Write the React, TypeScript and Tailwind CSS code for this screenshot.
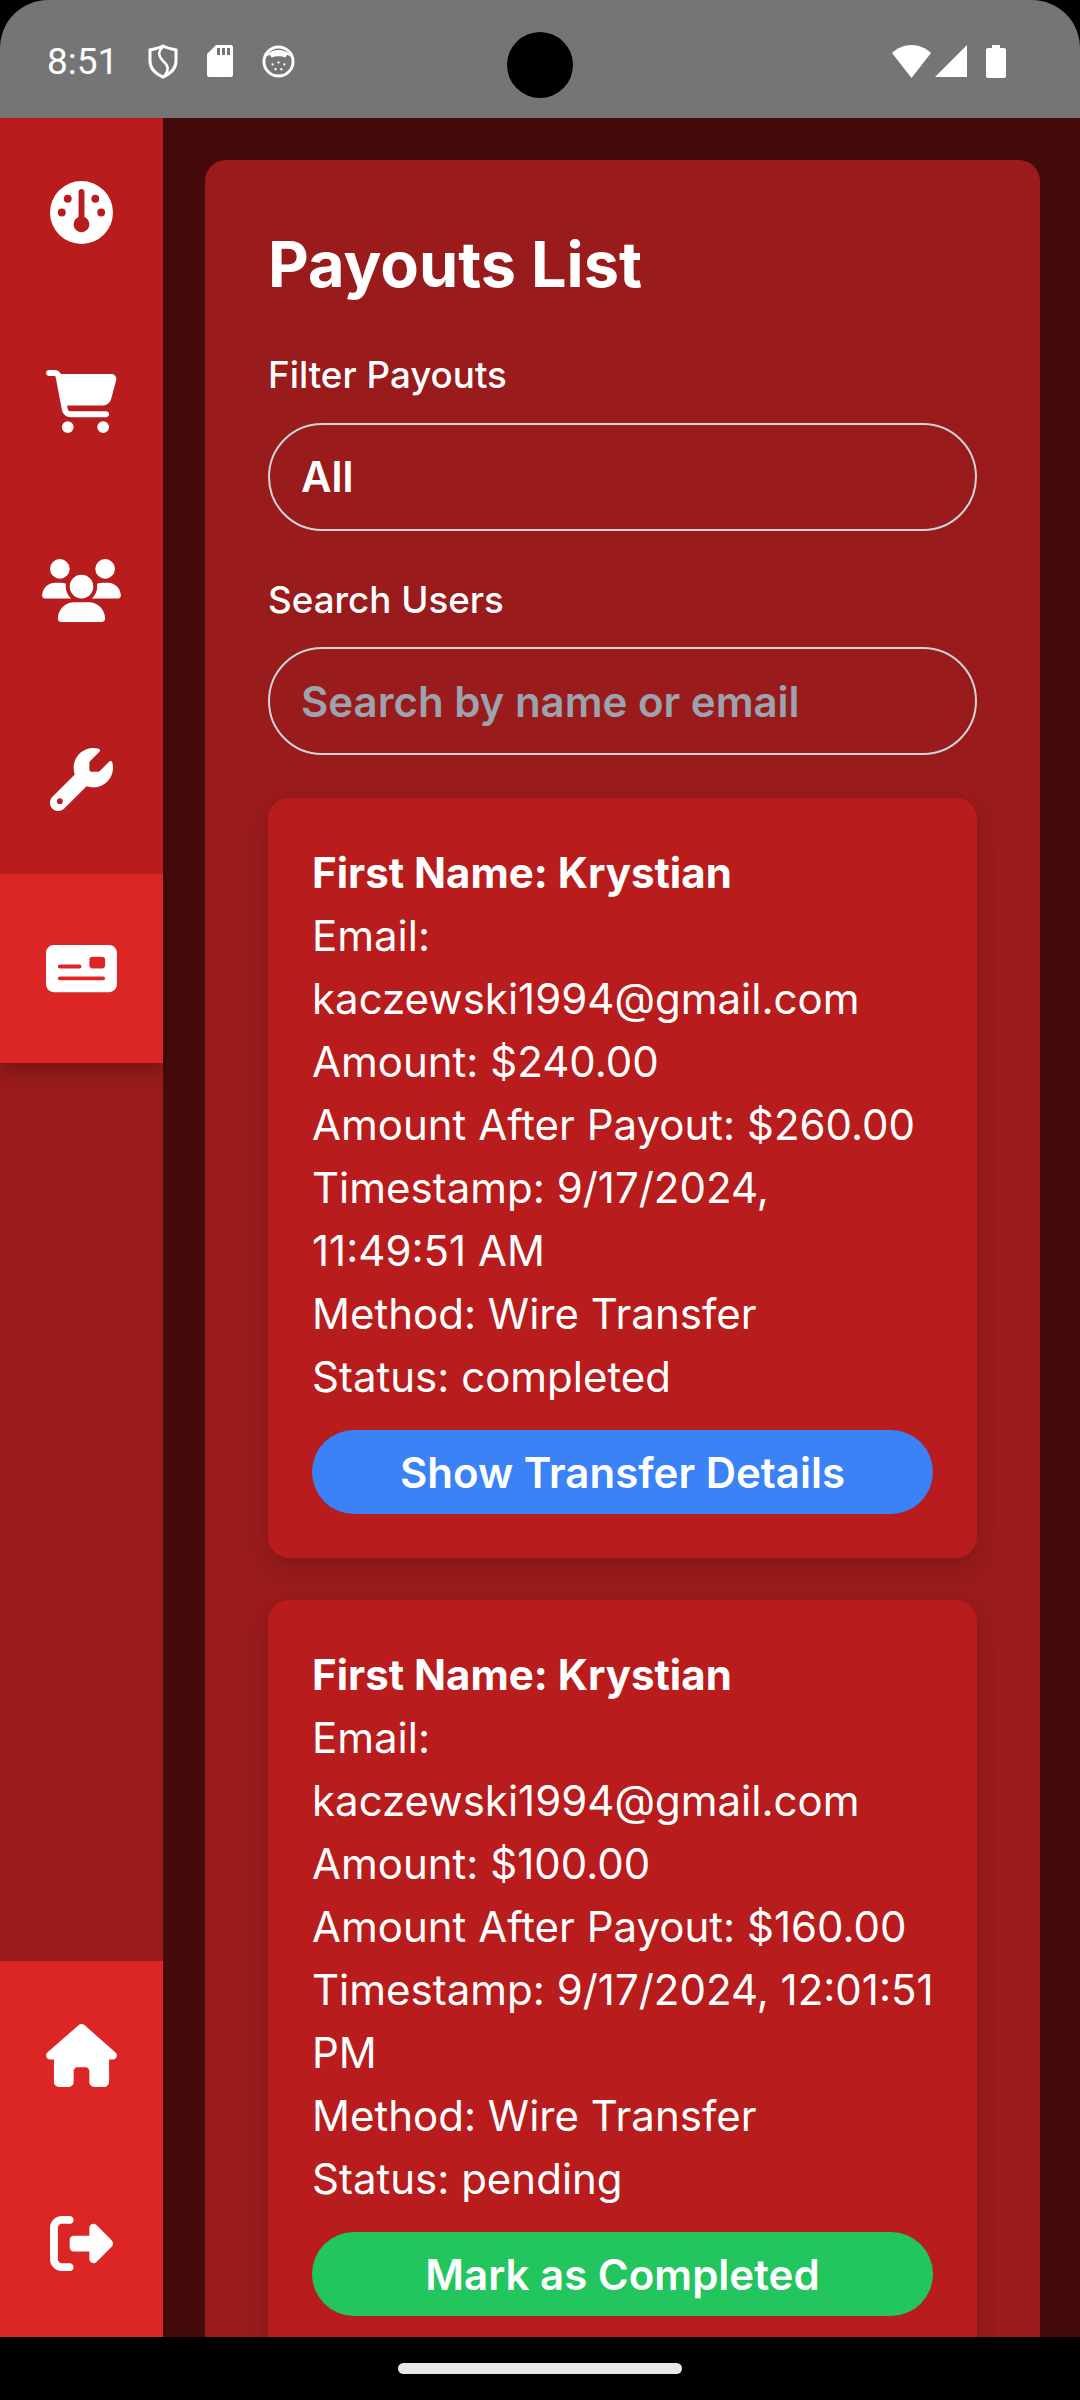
import {
  FaGauge,
  FaCartShopping,
  FaUsers,
  FaWrench,
  FaMoneyCheck,
  FaHouse,
  FaRightFromBracket,
} from 'react-icons/fa6';

function NavItem({ active, children }: { active?: boolean; children: React.ReactNode }) {
  return (
    <div className={active ? 'h-[189px] flex items-center justify-center bg-[#dc2626]' : 'h-[189px] flex items-center justify-center'}>
      {children}
    </div>
  );
}

function PayoutCard(props: {
  amount: string;
  after: string;
  timestamp: React.ReactNode;
  status: string;
  button: string;
  buttonClass: string;
}) {
  return (
    <div className="rounded-[21px] bg-[#b91c1c] px-[44px] pt-[43px] pb-[44px] shadow-[0_10px_24px_-4px_rgba(0,0,0,0.2)]">
      <p className="font-bold">First Name: Krystian</p>
      <p>Email: kaczewski1994@gmail.com</p>
      <p>Amount: {props.amount}</p>
      <p>Amount After Payout: {props.after}</p>
      <p className="mr-[-3px]">Timestamp: {props.timestamp}</p>
      <p>Method: Wire Transfer</p>
      <p>Status: {props.status}</p>
      <div className={`mt-[22px] h-[84px] rounded-full flex items-center justify-center font-semibold ${props.buttonClass}`}>
        {props.button}
      </div>
    </div>
  );
}

export default function App() {
  return (
    <div className="relative w-[1080px] h-[2400px] overflow-hidden bg-black font-['Inter',sans-serif] text-white">
      <div className="relative h-[118px] rounded-t-[48px] bg-[#757575] flex items-center justify-between pl-[47px] pr-[74px] pt-[4px]">
        <div className="flex items-center">
          <span className="font-['Roboto',sans-serif] text-[37px] leading-none">8:51</span>
          <svg viewBox="0 0 30 35" className="ml-[30px] w-[30px] h-[35px]" fill="none" stroke="white" strokeWidth="3">
            <path d="M15 2 C19 4 24 5 28 6 V17 C28 25 22 30 15 33 C8 30 2 25 2 17 V6 C6 5 11 4 15 2 Z" />
            <path d="M15 3 C9 8 11 13 15 17 C20 21 21 26 17 31" strokeWidth="2.5" />
          </svg>
          <svg viewBox="0 0 26 32" className="ml-[29px] w-[26px] h-[32px]" fill="white">
            <path d="M9 0 H24 a2 2 0 0 1 2 2 V30 a2 2 0 0 1 -2 2 H2 a2 2 0 0 1 -2 -2 V9 Z M10 3 v7 h3 v-7 Z M15 3 v7 h3 v-7 Z M20 3 v7 h3 v-7 Z" fillRule="evenodd" />
          </svg>
          <svg viewBox="0 0 34 34" className="ml-[29px] w-[33px] h-[33px]">
            <circle cx="17" cy="17" r="15" fill="none" stroke="white" strokeWidth="3" />
            <path d="M4 12 C8 3 26 3 30 12 L26 10 L24 13 C20 11 14 11 10 13 L8 10 Z" fill="white" />
            <circle cx="11" cy="20" r="1.2" fill="white" />
            <circle cx="17" cy="18" r="1.2" fill="white" />
            <circle cx="23" cy="20" r="1.2" fill="white" />
            <circle cx="14" cy="25" r="1.2" fill="white" />
            <circle cx="20" cy="25" r="1.2" fill="white" />
          </svg>
        </div>
        <div className="flex items-center">
          <svg viewBox="0 0 39 33" className="w-[39px] h-[33px]" fill="white">
            <path d="M19.5 33 L0 8 C5 3 12 0 19.5 0 C27 0 34 3 39 8 Z" />
          </svg>
          <svg viewBox="0 0 32 32" className="ml-[4px] w-[32px] h-[32px]" fill="white">
            <path d="M32 0 V32 H0 Z" />
          </svg>
          <svg viewBox="0 0 20 33" className="ml-[19px] w-[20px] h-[33px]" fill="white">
            <path d="M6 0 H14 V3 H18 a2 2 0 0 1 2 2 V31 a2 2 0 0 1 -2 2 H2 a2 2 0 0 1 -2 -2 V5 a2 2 0 0 1 2 -2 H6 Z" />
          </svg>
        </div>
        <div className="absolute left-[507px] top-[32px] w-[66px] h-[66px] rounded-full bg-black" />
      </div>

      <div className="flex h-[2219px] bg-[#450a0a]">
        <div className="w-[163px] flex flex-col justify-between bg-[#991b1b]">
          <div className="bg-[#b91c1c] shadow-[0_10px_15px_rgba(0,0,0,0.2)]">
            <NavItem><FaGauge className="w-[63px] h-[63px]" /></NavItem>
            <NavItem><FaCartShopping className="w-[71px] h-[63px]" /></NavItem>
            <NavItem><FaUsers className="w-[79px] h-[63px]" /></NavItem>
            <NavItem><FaWrench className="w-[63px] h-[63px]" /></NavItem>
            <NavItem active><FaMoneyCheck className="w-[71px] h-[63px]" /></NavItem>
          </div>
          <div className="bg-[#dc2626]">
            <div className="h-[188px] flex items-center justify-center"><FaHouse className="w-[71px] h-[63px]" /></div>
            <div className="h-[188px] flex items-center justify-center"><FaRightFromBracket className="w-[63px] h-[63px]" /></div>
          </div>
        </div>

        <div className="flex-1 pt-[42px] pl-[42px] pr-[40px] overflow-hidden">
          <div className="rounded-[21px] bg-[#991b1b] px-[63px] pt-[62px] text-[42px] leading-[63px]">
            <h1 className="text-[63px] leading-[84px] font-bold">Payouts List</h1>
            <label className="block mt-[43px] text-[36.75px] leading-[52px] font-medium">Filter Payouts</label>
            <div className="mt-[22px] h-[108px] rounded-full border-2 border-[#d1d5db] px-[31px] pb-[2px] flex items-center font-semibold">All</div>
            <label className="block mt-[43px] text-[36.75px] leading-[52px] font-medium">Search Users</label>
            <div className="mt-[21px] h-[108px] rounded-full border-2 border-[#d1d5db] px-[31px] flex items-center font-semibold text-[#9ca3af]">Search by name or email</div>
            <div className="mt-[43px] flex flex-col gap-[42px]">
              <PayoutCard
                amount="$240.00"
                after="$260.00"
                timestamp={<>9/17/2024,<br />11:49:51 AM</>}
                status="completed"
                button="Show Transfer Details"
                buttonClass="bg-[#3b82f6]"
              />
              <PayoutCard
                amount="$100.00"
                after="$160.00"
                timestamp="9/17/2024, 12:01:51 PM"
                status="pending"
                button="Mark as Completed"
                buttonClass="bg-[#22c55e]"
              />
            </div>
          </div>
        </div>
      </div>

      <div className="flex justify-center pt-[26px]">
        <div className="w-[284px] h-[11px] rounded-full bg-[#e8e8e8]" />
      </div>
    </div>
  );
}
